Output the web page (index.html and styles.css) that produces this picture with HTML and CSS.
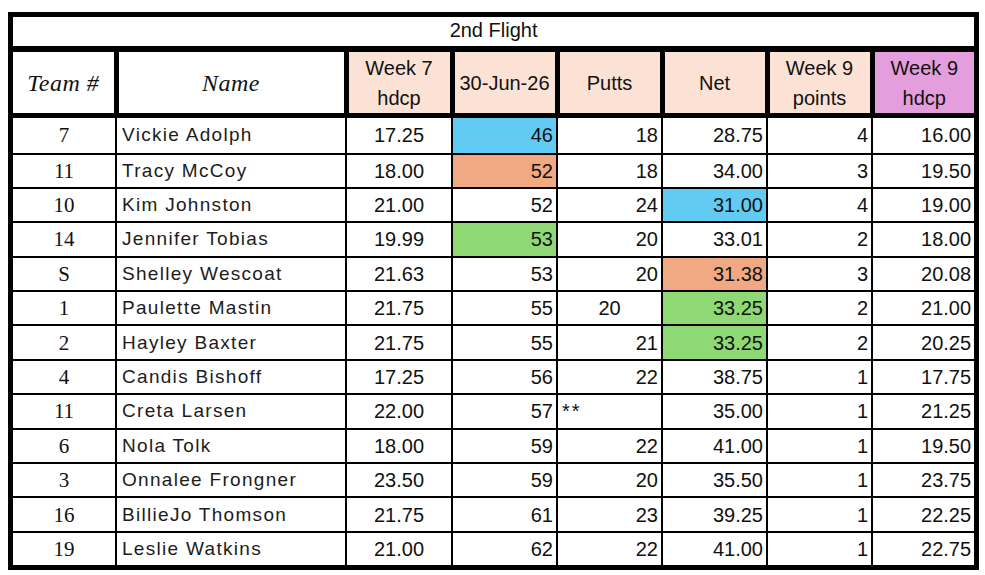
FILE: index.html
```html
<!DOCTYPE html>
<html lang="en">
<head>
<meta charset="utf-8">
<title>2nd Flight</title>
<link rel="stylesheet" href="styles.css">
</head>
<body>
<div class="sheet">
  <table class="scores">
    <colgroup>
      <col class="c-team"><col class="c-name"><col class="c-num"><col class="c-num2"><col class="c-num2"><col class="c-num2"><col class="c-num2"><col class="c-last">
    </colgroup>
    <thead>
      <tr class="title-row"><th colspan="8" class="title">2nd Flight</th></tr>
      <tr class="head-row">
        <th class="h-script">Team #</th>
        <th class="h-script">Name</th>
        <th class="h-peach">Week 7<br>hdcp</th>
        <th class="h-peach">30-Jun-26</th>
        <th class="h-peach">Putts</th>
        <th class="h-peach">Net</th>
        <th class="h-peach">Week 9<br>points</th>
        <th class="h-purple">Week 9<br>hdcp</th>
      </tr>
    </thead>
    <tbody>
      <tr class="first">
        <td class="team">7</td><td class="name">Vickie Adolph</td><td class="ctr">17.25</td><td class="num blue">46</td><td class="num">18</td><td class="num">28.75</td><td class="num">4</td><td class="num">16.00</td>
      </tr>
      <tr>
        <td class="team">11</td><td class="name">Tracy McCoy</td><td class="ctr">18.00</td><td class="num orange">52</td><td class="num">18</td><td class="num">34.00</td><td class="num">3</td><td class="num">19.50</td>
      </tr>
      <tr>
        <td class="team">10</td><td class="name">Kim Johnston</td><td class="ctr">21.00</td><td class="num">52</td><td class="num">24</td><td class="num blue">31.00</td><td class="num">4</td><td class="num">19.00</td>
      </tr>
      <tr>
        <td class="team">14</td><td class="name">Jennifer Tobias</td><td class="ctr">19.99</td><td class="num green">53</td><td class="num">20</td><td class="num">33.01</td><td class="num">2</td><td class="num">18.00</td>
      </tr>
      <tr>
        <td class="team">S</td><td class="name">Shelley Wescoat</td><td class="ctr">21.63</td><td class="num">53</td><td class="num">20</td><td class="num orange">31.38</td><td class="num">3</td><td class="num">20.08</td>
      </tr>
      <tr>
        <td class="team">1</td><td class="name">Paulette Mastin</td><td class="ctr">21.75</td><td class="num">55</td><td class="ctr">20</td><td class="num green">33.25</td><td class="num">2</td><td class="num">21.00</td>
      </tr>
      <tr>
        <td class="team">2</td><td class="name">Hayley Baxter</td><td class="ctr">21.75</td><td class="num">55</td><td class="num">21</td><td class="num green">33.25</td><td class="num">2</td><td class="num">20.25</td>
      </tr>
      <tr>
        <td class="team">4</td><td class="name">Candis Bishoff</td><td class="ctr">17.25</td><td class="num">56</td><td class="num">22</td><td class="num">38.75</td><td class="num">1</td><td class="num">17.75</td>
      </tr>
      <tr>
        <td class="team">11</td><td class="name">Creta Larsen</td><td class="ctr">22.00</td><td class="num">57</td><td class="note">**</td><td class="num">35.00</td><td class="num">1</td><td class="num">21.25</td>
      </tr>
      <tr>
        <td class="team">6</td><td class="name">Nola Tolk</td><td class="ctr">18.00</td><td class="num">59</td><td class="num">22</td><td class="num">41.00</td><td class="num">1</td><td class="num">19.50</td>
      </tr>
      <tr>
        <td class="team">3</td><td class="name">Onnalee Frongner</td><td class="ctr">23.50</td><td class="num">59</td><td class="num">20</td><td class="num">35.50</td><td class="num">1</td><td class="num">23.75</td>
      </tr>
      <tr>
        <td class="team">16</td><td class="name">BillieJo Thomson</td><td class="ctr">21.75</td><td class="num">61</td><td class="num">23</td><td class="num">39.25</td><td class="num">1</td><td class="num">22.25</td>
      </tr>
      <tr class="last">
        <td class="team">19</td><td class="name">Leslie Watkins</td><td class="ctr">21.00</td><td class="num">62</td><td class="num">22</td><td class="num">41.00</td><td class="num">1</td><td class="num">22.75</td>
      </tr>
    </tbody>
  </table>
</div>
</body>
</html>
```

FILE: styles.css
```css
html, body {
  margin: 0;
  padding: 0;
  background: #ffffff;
}

body {
  padding: 12px 0 0 8px;
  font-family: "Liberation Sans", Arial, sans-serif;
  color: #111111;
}

.sheet {
  width: 961px;
  border: 5px solid #000000;
  background: #ffffff;
}

.scores {
  width: 961px;
  table-layout: fixed;
  border-collapse: collapse;
  font-size: 20px;
}

.c-team { width: 103px; }
.c-name { width: 230px; }
.c-num { width: 106px; }
.c-num2 { width: 105px; }
.c-last { width: 102px; }

.scores th,
.scores td {
  padding: 0;
  border-right: 2px solid #000000;
  border-bottom: 2px solid #000000;
  white-space: nowrap;
  overflow: hidden;
  vertical-align: middle;
}

.scores th:last-child,
.scores td:last-child {
  border-right: none;
}

.scores tr.last td {
  border-bottom: none;
}

/* title row */
.title-row .title {
  height: 32px;
  font-weight: normal;
  font-size: 20px;
  text-align: center;
  border-bottom: 6px solid #000000;
  padding-bottom: 2px;
  box-sizing: border-box;
}

/* header row */
.head-row th {
  height: 60.5px;
  font-weight: normal;
  line-height: 30px;
  padding-top: 0.5px;
  text-align: center;
  border-right: 5px solid #000000;
  border-bottom: 5px solid #000000;
}

.head-row th:last-child {
  border-right: none;
}

.h-script {
  font-family: "Liberation Serif", "Times New Roman", serif;
  font-style: italic;
  font-size: 24px;
  letter-spacing: 0.5px;
  background: #ffffff;
}

.h-peach {
  background: #fbe2d5;
}

.h-purple {
  background: #e59edd;
}

/* body rows */
.scores tbody td {
  height: 32.4px;
  line-height: 24px;
}

.scores tbody tr.first td {
  height: 34.5px;
}

.team {
  text-align: center;
  font-family: "Liberation Serif", "Times New Roman", serif;
  font-size: 21px;
}

.name {
  text-align: left;
  padding-left: 5px !important;
  font-size: 19px;
  letter-spacing: 1.3px;
  color: #1c1c1c;
}

.ctr {
  text-align: center;
}

.num {
  text-align: right;
  padding-right: 3px !important;
}

.note {
  text-align: left;
  padding-left: 4px !important;
  letter-spacing: 2px;
}

.blue { background: #61cbf3; }
.orange { background: #f1a983; }
.green { background: #8ed973; }
```
